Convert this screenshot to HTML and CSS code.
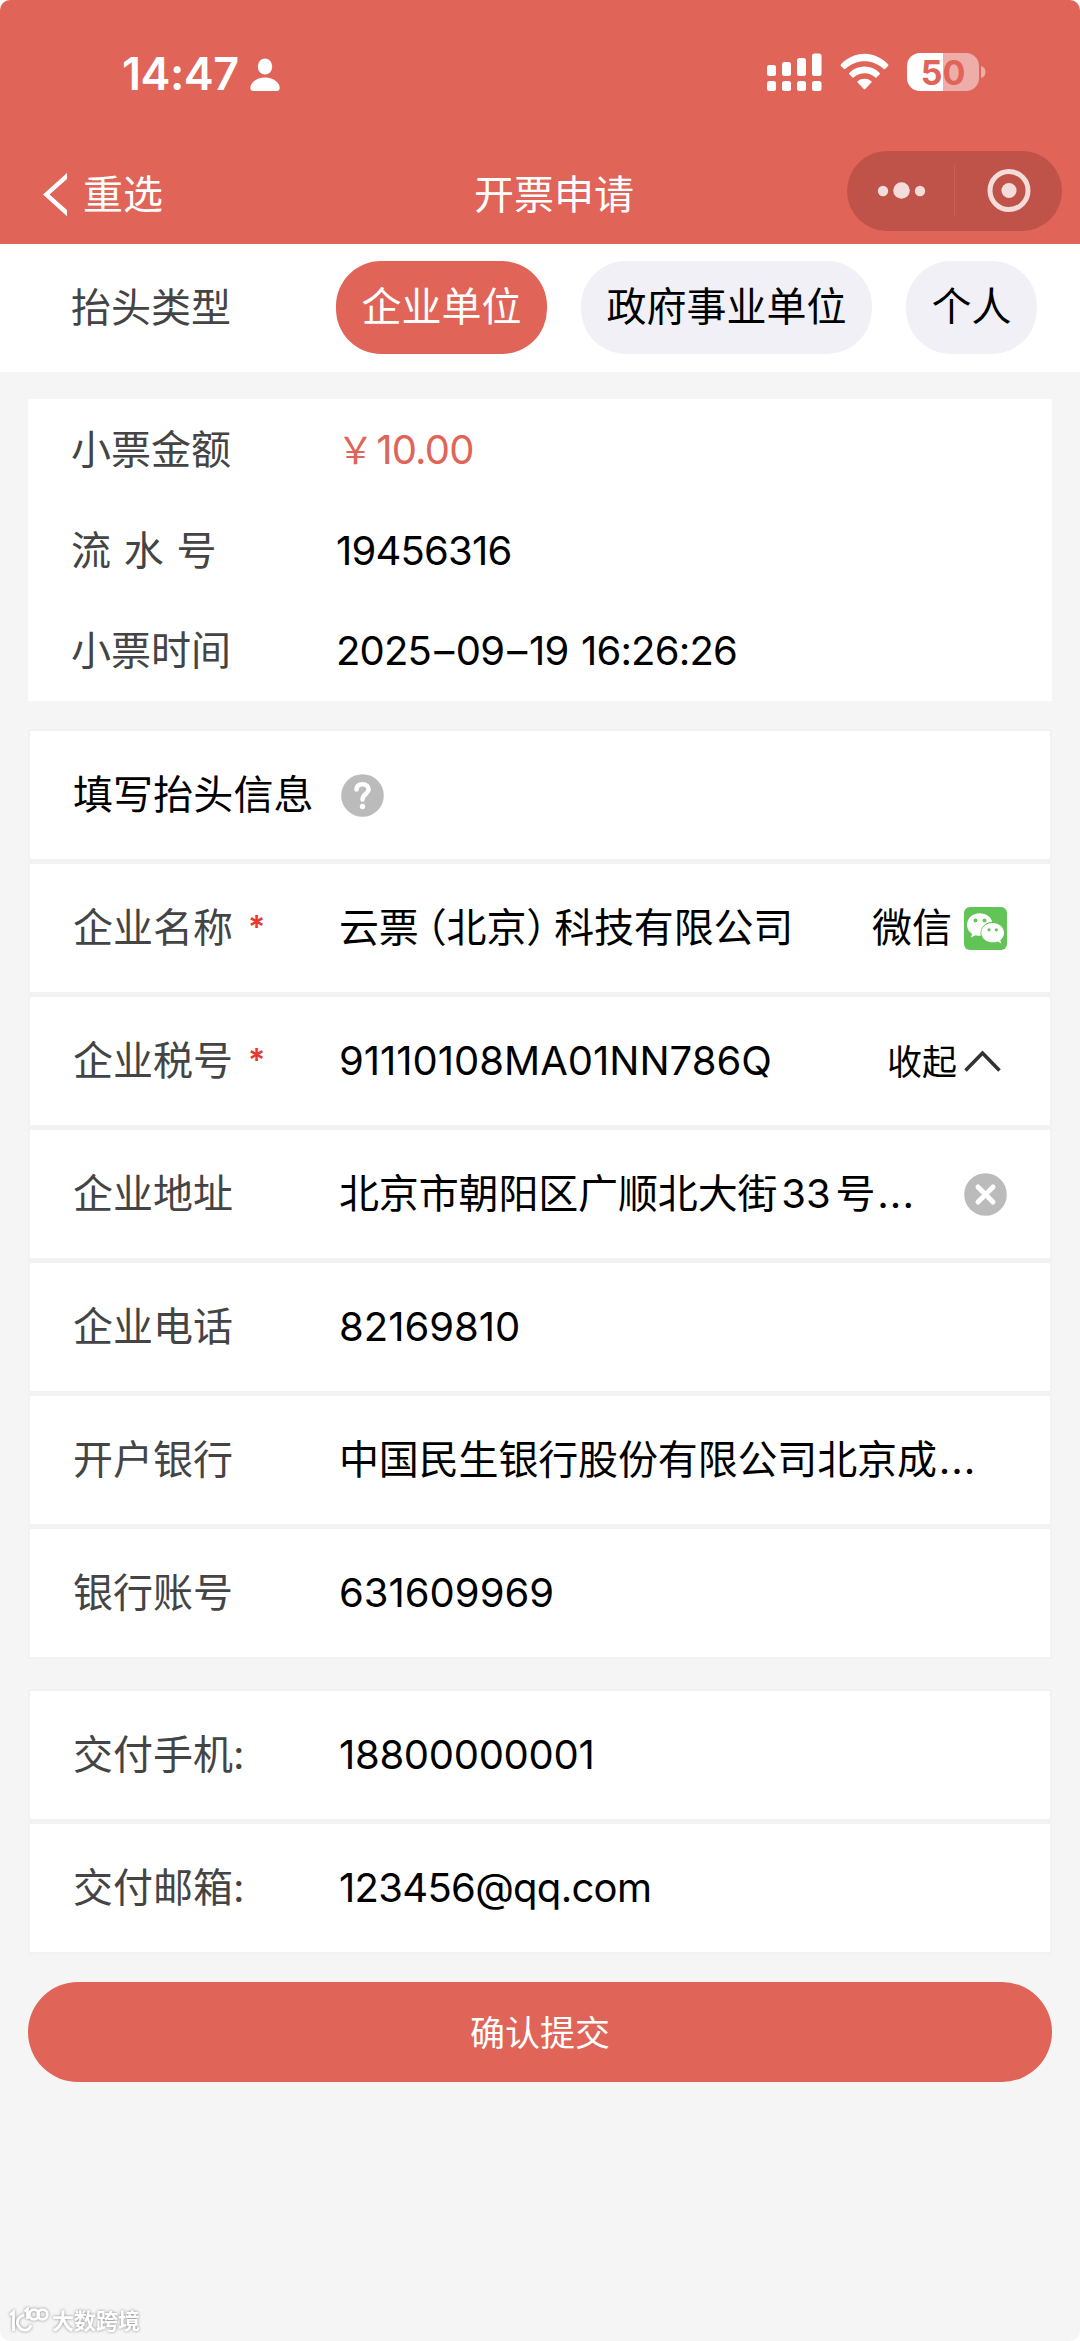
FILE: index.html
```html
<!DOCTYPE html>
<html lang="zh-CN">
<head>
    <meta charset="UTF-8">
    <title>开票申请</title>
    <link rel="stylesheet" href="styles.css">
</head>
<body>
    <div class="page">
        <header class="header">
            <div class="status-bar">
                <div class="status-left">
                    <span class="time">14:47</span>
                    <svg class="person" width="30" height="34" viewBox="0 0 30 34" fill="#fff">
                        <ellipse cx="15" cy="8.5" rx="7.2" ry="8" />
                        <path d="M3.5 33C1.5 33 0.3 31.8 0.3 30C0.3 25 6 19.5 15 19.5S29.7 25 29.7 30C29.7 31.8 28.5 33 26.5 33Z" />
                    </svg>
                </div>
                <div class="status-right">
                    <svg width="55" height="38" viewBox="0 0 55 38" fill="#fff">
                        <rect x="0" y="12" width="9" height="11" rx="2.5" />
                        <rect x="15" y="9" width="9" height="14" rx="2.5" />
                        <rect x="30" y="5" width="9" height="18" rx="2.5" />
                        <rect x="45" y="0.5" width="9.5" height="22.5" rx="2.5" />
                        <rect x="0" y="28" width="9" height="10" rx="2.5" />
                        <rect x="15" y="28" width="9" height="10" rx="2.5" />
                        <rect x="30" y="28" width="9" height="10" rx="2.5" />
                        <rect x="45" y="28" width="9.5" height="10" rx="2.5" />
                    </svg>
                    <svg class="wifi" width="49" height="38" viewBox="0 0 49 38" fill="#fff">
                        <path d="M1 11.3C14-2.8 35-2.8 48 11.3Q48.8 12.2 48 13L45.3 15.8Q44.4 16.6 43.5 15.8C32.5 5.6 16.5 5.6 5.5 15.8Q4.6 16.6 3.7 15.8L1 13Q0.2 12.2 1 11.3Z" />
                        <path d="M9.3 19.9C17.7 11.4 31.3 11.4 39.7 19.9Q40.3 20.6 39.7 21.3L36.7 24.3Q35.9 25 35.1 24.3C29 19 20 19 13.9 24.3Q13.1 25 12.3 24.3L9.3 21.3Q8.7 20.6 9.3 19.9Z" />
                        <path d="M17.6 28.2C21.6 24.9 27.4 24.9 31.4 28.2Q32.1 28.9 31.4 29.6L25.2 36Q24.5 36.6 23.8 36L17.6 29.6Q16.9 28.9 17.6 28.2Z" />
                    </svg>
                    <div class="battery"><span>50</span></div>
                    <svg class="nub" width="5" height="12" viewBox="0 0 5 12"><path d="M0 0C6 1.5 6 10.5 0 12Z" fill="#efadaa" /></svg>
                </div>
            </div>
            <div class="nav-bar">
                <svg class="back" width="25" height="44" viewBox="0 0 25 44" fill="#fff">
                    <path d="M24 0V6L6.5 21.5L24 37V43.3L0 21.5Z" />
                </svg>
                <span class="back-text">重选</span>
                <h1 class="title">开票申请</h1>
                <div class="capsule">
                    <svg width="216" height="80" viewBox="0 0 216 80">
                        <g fill="#f4dcda">
                            <circle cx="36" cy="40" r="5.2" />
                            <circle cx="54.5" cy="39.5" r="8.3" />
                            <circle cx="73" cy="40" r="5.2" />
                            <circle cx="162" cy="39.5" r="7.6" />
                        </g>
                        <path d="M107.5 14V65" stroke="#c95f56" stroke-width="1" />
                        <circle cx="162" cy="39.5" r="19" fill="none" stroke="#f4dcda" stroke-width="5" />
                    </svg>
                </div>
            </div>
        </header>

        <div class="type-bar">
            <span class="label">抬头类型</span>
            <div class="pills">
                <a class="pill active">企业单位</a>
                <a class="pill">政府事业单位</a>
                <a class="pill">个人</a>
            </div>
        </div>

        <div class="receipt">
            <div class="receipt-row">
                <span class="label">小票金额</span>
                <span class="value price"><span class="yen">￥</span>10.00</span>
            </div>
            <div class="receipt-row">
                <span class="label serial">流 水 号</span>
                <span class="value">19456316</span>
            </div>
            <div class="receipt-row">
                <span class="label">小票时间</span>
                <span class="value date">2025<span class="dash">–</span>09<span class="dash">–</span>19 16:26:26</span>
            </div>
        </div>

        <div class="form">
            <div class="form-row">
                <span class="heading">填写抬头信息</span>
                <svg class="help" width="43" height="43" viewBox="0 0 43 43">
                    <circle cx="21.5" cy="21.5" r="21.3" fill="#bbb" />
                    <path d="M15.5 15.5C15.5 12 18 10.3 21.5 10.3S27.6 12.3 27.6 15.5C27.6 19.5 21.5 20 21.5 25.5" fill="none" stroke="#fff" stroke-width="4.6" stroke-linecap="round" />
                    <circle cx="21.5" cy="32.5" r="2.7" fill="#fff" />
                </svg>
            </div>
            <div class="form-row">
                <span class="label">企业名称<i class="required">*</i></span>
                <span class="value cn">云票<span class="paren-l">（</span>北京<span class="paren-r">）</span>科技有限公司</span>
                <span class="wechat">微信</span>
                <svg class="row-icon" width="43" height="43" viewBox="0 0 43 43">
                    <rect width="43" height="43" rx="6" fill="#62c456" />
                    <path d="M15.5 6.3C8.5 6.3 3 11.3 3 17.8C3 21.6 4.8 24.7 8 26.7L7 30.5L11.5 28.2C13 28.7 15 28.9 16.7 28.8C15.5 21.5 20.5 15.2 28.3 14.8C26.8 9.8 21.8 6.3 15.5 6.3Z" fill="#fff" />
                    <path d="M28.7 15.9C22.2 15.9 17.3 20.2 17.3 25.7S22.2 35.3 28.7 35.3C30.6 35.3 32.3 35 33.7 34.4L37.2 36.5L36.3 32.9C38.8 31.2 40 28.7 40 25.7C40 20.2 35 15.9 28.7 15.9Z" fill="#fff" />
                    <g fill="#62c456">
                        <circle cx="11.5" cy="13.5" r="1.9" />
                        <circle cx="20.5" cy="13.5" r="1.9" />
                        <circle cx="25" cy="22.8" r="1.6" />
                        <circle cx="32.3" cy="22.8" r="1.6" />
                    </g>
                </svg>
            </div>
            <div class="form-row">
                <span class="label">企业税号<i class="required">*</i></span>
                <span class="value">91110108MA01NN786Q</span>
                <span class="collapse">收起</span>
                <svg class="arrow" width="37" height="23" viewBox="0 0 37 23">
                    <path d="M1.5 20.5L18.5 3L35.5 20.5" fill="none" stroke="#333" stroke-width="3.6" />
                </svg>
            </div>
            <div class="form-row">
                <span class="label">企业地址</span>
                <span class="value cn">北京市朝阳区广顺北大街<span class="num">33</span>号<span class="dots">...</span></span>
                <svg class="row-icon" width="43" height="43" viewBox="0 0 43 43">
                    <circle cx="21.5" cy="21.5" r="21.3" fill="#bbb" />
                    <path d="M14 14L29 29M29 14L14 29" stroke="#fff" stroke-width="5" stroke-linecap="round" />
                </svg>
            </div>
            <div class="form-row">
                <span class="label">企业电话</span>
                <span class="value">82169810</span>
            </div>
            <div class="form-row">
                <span class="label">开户银行</span>
                <span class="value cn">中国民生银行股份有限公司北京成<span class="dots">...</span></span>
            </div>
            <div class="form-row">
                <span class="label">银行账号</span>
                <span class="value">631609969</span>
            </div>
        </div>

        <div class="form delivery">
            <div class="form-row">
                <span class="label">交付手机:</span>
                <span class="value phone">18800000001</span>
            </div>
            <div class="form-row">
                <span class="label">交付邮箱:</span>
                <span class="value email">123456@qq.com</span>
            </div>
        </div>

        <button class="submit">确认提交</button>

        <div class="watermark">
            <svg width="40" height="28" viewBox="0 0 40 28" fill="none" stroke="#fff" stroke-width="2.8">
                <path d="M1 8L4.5 5V24M15 8C8.5 10 7 15 9.5 19C12.5 24.5 20 25 22 18" />
                <path d="M15.5 4.5L18.5 2V12" />
                <circle cx="25" cy="7.5" r="4.8" />
                <circle cx="33.5" cy="7.5" r="4.8" />
            </svg>
            <span>大数跨境</span>
        </div>
    </div>
</body>
</html>
```
FILE: styles.css
```css
* {
    box-sizing: border-box;
}

body {
    margin: 0;
    background-color: #fff;
    color: #000;
    font-family: Inter, "Noto Sans CJK SC", sans-serif;
    font-size: 40px;
    line-height: 1;
}

.page {
    display: flex;
    flex-direction: column;
    height: 2341px;
    background-color: #f5f5f5;
    border-radius: 10px;
    overflow: hidden;
}

/* header */
.header {
    height: 244px;
    background-color: #e16458;
    color: #fff;
}

.status-bar {
    display: flex;
    justify-content: space-between;
    height: 151px;
    padding: 53px 94px 0 122px;
}

.status-left,
.status-right {
    display: flex;
    align-items: center;
    height: 38px;
}

.time {
    width: 128px;
    padding-top: 3px;
    font-size: 45px;
    font-weight: 600;
    letter-spacing: -0.5px;
}

.person {
    margin-top: 5px;
}

.wifi {
    margin-left: 18px;
}

.battery {
    display: flex;
    align-items: center;
    justify-content: center;
    width: 72px;
    height: 38px;
    margin-left: 18px;
    padding-top: 2px;
    border-radius: 13px;
    background: linear-gradient(90deg, #fff 50%, #efadaa 50%);
    color: #e16458;
    font-size: 34px;
    font-weight: 700;
}

.nub {
    margin-left: 2px;
}

.nav-bar {
    display: flex;
    align-items: center;
    height: 80px;
    padding: 0 18px 0 43px;
}

.back {
    margin-top: 8px;
}

.back-text {
    width: 391px;
    margin: 8px 0 0 15px;
}

.title {
    margin: 8px 0 0;
    font-size: 40px;
    font-weight: 400;
}

.capsule {
    width: 215px;
    height: 80px;
    margin-left: auto;
    border-radius: 40px;
    background-color: #bf5249;
}

.capsule svg {
    display: block;
}

/* title type */
.type-bar {
    display: flex;
    align-items: center;
    height: 128px;
    padding-left: 71px;
    background-color: #fff;
}

.label {
    flex: none;
    width: 265px;
    color: #444;
    white-space: nowrap;
}

.pills {
    display: flex;
    gap: 34px;
    margin-top: -1px;
}

.pill {
    height: 93px;
    padding: 0 25.5px;
    border-radius: 45px;
    background-color: #f1f0f6;
    line-height: 92px;
}

.pill.active {
    background-color: #e16458;
    color: #fff;
}

/* receipt */
.receipt {
    margin: 27px 28px 0;
    padding: 1px 0 0 43px;
    height: 302px;
    background-color: #fff;
}

.receipt-row {
    display: flex;
    align-items: center;
    height: 100.5px;
}

.value {
    white-space: nowrap;
}

.receipt .value {
    letter-spacing: -0.8px;
}

.price {
    color: #e16458;
}

.yen {
    margin: 0 3px 0 1px;
    font-size: 37px;
}

.serial {
    word-spacing: 1.5px;
}

.dash {
    margin: 0 2.5px 0 3px;
}

.date {
    word-spacing: 2px;
}

/* form */
.form {
    display: flex;
    flex-direction: column;
    gap: 5px;
    margin: 28px 28px 0;
    border: 2px solid #f2f2f2;
    background-color: #f2f2f2;
}

.delivery {
    margin-top: 30px;
}

.form-row {
    display: flex;
    align-items: center;
    height: 128px;
    padding: 0 43px;
    background-color: #fff;
}

.form-row .label {
    width: 266px;
}

.heading {
    letter-spacing: 0.1px;
}

.help {
    margin-left: 27px;
}

.required {
    margin-left: 15px;
    color: #e8382f;
    font-size: 32px;
    font-style: normal;
    font-weight: 600;
    line-height: 0;
    vertical-align: 3px;
}

.cn {
    letter-spacing: -0.15px;
}

/* half-width brackets */
.paren-l {
    margin-left: 8px;
    font-feature-settings: "halt";
}

.paren-r {
    margin-right: 8px;
    font-feature-settings: "halt";
}

.num {
    margin: 0 5px 0 4px;
}

.dots {
    margin-left: 2px;
    letter-spacing: 1px;
}

.phone {
    letter-spacing: -0.3px;
}

.email {
    letter-spacing: -0.7px;
}

.wechat,
.collapse {
    margin-left: auto;
}

.wechat + .row-icon {
    margin-left: 12px;
}

.row-icon {
    margin-left: auto;
}

.collapse {
    padding-top: 2px;
    font-size: 35px;
}

.arrow {
    margin: 0 6px 0 7px;
}

.submit {
    height: 100px;
    margin: 28px 28px 0;
    padding: 0 0 4px;
    border: none;
    border-radius: 50px;
    background-color: #e16458;
    color: #fff;
    font-family: inherit;
    font-size: 35px;
}

.watermark {
    display: flex;
    align-items: center;
    gap: 3px;
    margin: auto 0 6px 9px;
    color: #fff;
    font-size: 22px;
    font-weight: 700;
    filter: drop-shadow(0 0 1.5px #888);
}
```
